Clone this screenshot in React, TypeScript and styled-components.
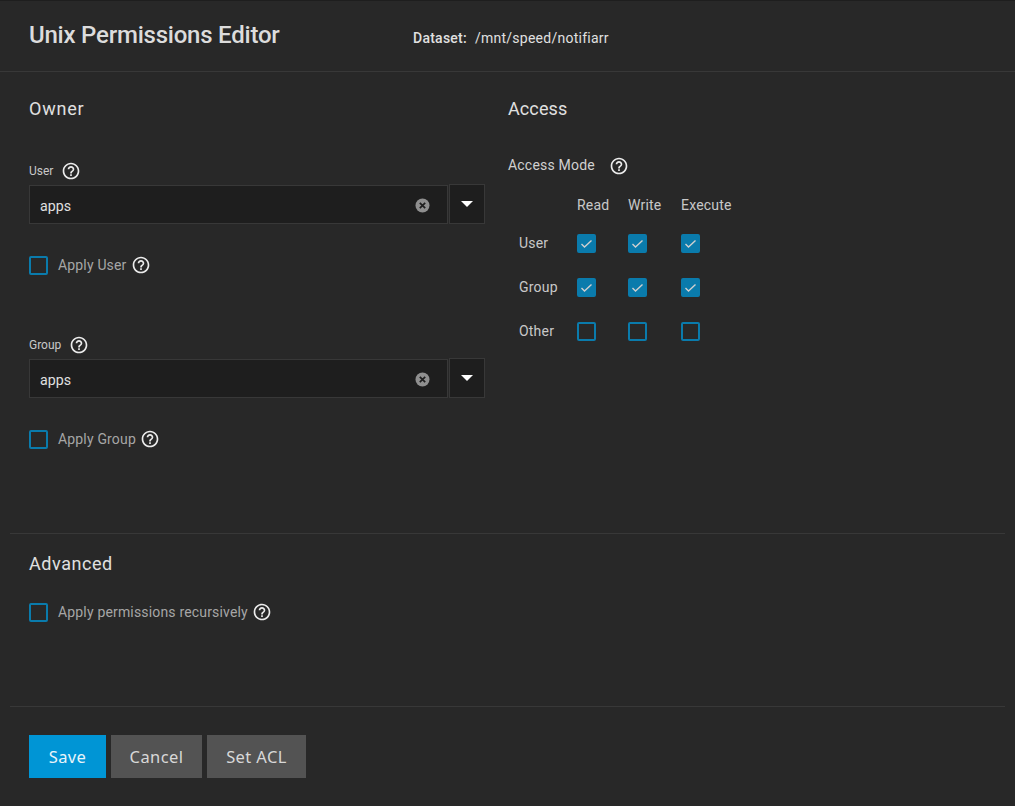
import styled, { createGlobalStyle } from "styled-components";

const GlobalStyle = createGlobalStyle`
  html, body {
    margin: 0;
    padding: 0;
    background: #282828;
  }
  * {
    box-sizing: border-box;
  }
  body {
    font-family: Roboto, "Liberation Sans", sans-serif;
    color: #e0e0e0;
  }
`;

const Page = styled.div`
  width: 1015px;
  height: 806px;
  background: #282828;
  border-top: 1px solid #1e1e1e;
  overflow: hidden;
`;

const Header = styled.header`
  display: flex;
  align-items: center;
  height: 71px;
  padding: 0 0 0 29px;
  border-bottom: 1px solid #383838;
`;

const Title = styled.h1`
  width: 384px;
  margin: 0 0 2px;
  font-size: 24px;
  line-height: 28px;
  font-weight: 500;
  letter-spacing: -0.22px;
  color: #dcdcdc;
`;

const Dataset = styled.div`
  display: flex;
  gap: 8px;
  margin-top: 4px;
  font-size: 14px;
  line-height: 20px;
  letter-spacing: 0.25px;
  color: #e0e0e0;

  & > strong {
    font-weight: 500;
  }
`;

const Columns = styled.div`
  display: grid;
  grid-template-columns: 457px 1fr;
  column-gap: 22px;
  height: 461px;
  padding: 26px 0 0 29px;
`;

const SectionTitle = styled.h2<{ $tracking?: number }>`
  margin: 0;
  font-size: 18px;
  line-height: 22px;
  font-weight: 400;
  letter-spacing: ${({ $tracking }) => $tracking ?? 0.55}px;
  color: #e0e0e0;
`;

const Field = styled.div<{ $top: number }>`
  margin-top: ${({ $top }) => $top}px;
`;

const FieldLabel = styled.label`
  display: flex;
  align-items: center;
  gap: 8px;
  height: 18px;
  font-size: 12px;
  color: #c8c8c8;
`;

const SelectRow = styled.div`
  display: flex;
  align-items: flex-end;
  gap: 1px;
  margin-top: 4px;
`;

const SelectInput = styled.div`
  display: flex;
  align-items: center;
  justify-content: space-between;
  width: 419px;
  height: 39px;
  padding: 2px 17px 0 10px;
  background: #1e1e1e;
  border: 1px solid #383838;
  font-size: 14.2px;
  color: #e0e0e0;
`;

const SelectToggle = styled.button`
  display: flex;
  align-items: center;
  justify-content: center;
  width: 36px;
  height: 40px;
  padding: 0;
  background: #1e1e1e;
  border: 1px solid #383838;
`;

const CheckRow = styled.label<{ $top: number }>`
  display: flex;
  align-items: center;
  margin-top: ${({ $top }) => $top}px;
  height: 19px;
  font-size: 14px;
  letter-spacing: 0.17px;
  color: #a6a6a6;

  & > svg {
    margin-bottom: 2px;
  }
`;

const CheckText = styled.span`
  margin: 0 4px 2px 10px;
`;

const Box = styled.span<{ $checked?: boolean }>`
  display: inline-flex;
  align-items: center;
  justify-content: center;
  flex: none;
  width: 19px;
  height: 19px;
  border: 2px solid #0a7bac;
  border-radius: 2px;
  background: ${({ $checked }) => ($checked ? "#0a7bac" : "transparent")};
`;

const AccessHead = styled.div`
  display: flex;
  align-items: center;
  gap: 14px;
  margin-top: 33px;
  height: 24px;
  font-size: 14px;
  letter-spacing: 0.2px;
  color: #d0d0d0;

  & > svg {
    margin-top: 2px;
  }
`;

const MatrixHeader = styled.div`
  display: grid;
  grid-template-columns: 69px 51px 53px 60px;
  height: 33px;
  margin-top: 7px;
  font-size: 14px;
  letter-spacing: 0.2px;
  color: #c8c8c8;
`;

const ColHead = styled.span`
  line-height: 20px;
  margin-top: 11px;
`;

const Matrix = styled.div`
  display: grid;
  grid-template-columns: 69px 51px 53px 60px;
  grid-auto-rows: 44px;
  margin-top: 4px;
  font-size: 14px;
  letter-spacing: 0.2px;
  color: #c8c8c8;
`;

const MatrixRow = styled.div`
  display: contents;
`;

const RowLabel = styled.span`
  align-self: center;
  padding-left: 11px;
  margin-top: -1px;
`;

const MatrixCell = styled.span`
  display: flex;
  align-items: center;
`;

const Divider = styled.hr`
  margin: 0 10px;
  border: 0;
  border-top: 1px solid #383838;
`;

const Advanced = styled.section`
  height: 172px;
  padding: 19px 0 0 29px;
`;

const Actions = styled.footer`
  display: flex;
  gap: 5px;
  padding: 28px 0 0 29px;
`;

const ActionButton = styled.button<{ $primary?: boolean; $width: number }>`
  width: ${({ $width }) => $width}px;
  height: 43px;
  padding: 0;
  border: 0;
  font-family: "Noto Sans", sans-serif;
  font-size: 16.5px;
  letter-spacing: 0.4px;
  color: ${({ $primary }) => ($primary ? "#e8f4fa" : "#d8d8d8")};
  background: ${({ $primary }) => ($primary ? "#0095d5" : "#535353")};
`;

const HelpIcon = () => (
  <svg width="20" height="20" viewBox="0 0 24 24" fill="none">
    <path
      fill="#ececec"
      d="M11 18h2v-2h-2v2zm1-16C6.48 2 2 6.48 2 12s4.48 10 10 10 10-4.48 10-10S17.52 2 12 2zm0 18c-4.41 0-8-3.59-8-8s3.59-8 8-8 8 3.59 8 8-3.59 8-8 8zm0-14c-2.21 0-4 1.79-4 4h2c0-1.1.9-2 2-2s2 .9 2 2c0 2-3 1.75-3 5h2c0-2.25 3-2.5 3-5 0-2.21-1.79-4-4-4z"
    />
  </svg>
);

const ClearIcon = () => (
  <svg width="15" height="15" viewBox="0 0 15 15">
    <circle cx="7.5" cy="7.5" r="7" fill="#8f8f8f" />
    <path d="M4.8 4.8l5.4 5.4M10.2 4.8l-5.4 5.4" stroke="#1e1e1e" strokeWidth="1.7" />
  </svg>
);

const CaretIcon = () => (
  <svg width="12" height="6" viewBox="0 0 12 6">
    <path d="M0 0h12L6 6z" fill="#ffffff" />
  </svg>
);

const CheckIcon = () => (
  <svg width="13" height="13" viewBox="0 0 13 13" fill="none">
    <path d="M1.5 7l3 3 7-6.5" stroke="#d0d0d0" strokeWidth="1.4" />
  </svg>
);

const modes = [
  { name: "User", on: true },
  { name: "Group", on: true },
  { name: "Other", on: false },
];

const OwnerField = ({ label, top, checkLabel }: { label: string; top: number; checkLabel: string }) => (
  <>
    <Field $top={top}>
      <FieldLabel>
        {label}
        <HelpIcon />
      </FieldLabel>
      <SelectRow>
        <SelectInput>
          apps
          <ClearIcon />
        </SelectInput>
        <SelectToggle>
          <CaretIcon />
        </SelectToggle>
      </SelectRow>
    </Field>
    <CheckRow $top={32}>
      <Box />
      <CheckText>{checkLabel}</CheckText>
      <HelpIcon />
    </CheckRow>
  </>
);

export default function App() {
  return (
    <Page>
      <GlobalStyle />
      <Header>
        <Title>Unix Permissions Editor</Title>
        <Dataset>
          <strong>Dataset:</strong>
          <span>/mnt/speed/notifiarr</span>
        </Dataset>
      </Header>
      <Columns>
        <div>
          <SectionTitle $tracking={0.8}>Owner</SectionTitle>
          <OwnerField label="User" top={42} checkLabel="Apply User" />
          <OwnerField label="Group" top={61} checkLabel="Apply Group" />
        </div>
        <div>
          <SectionTitle $tracking={0.1}>Access</SectionTitle>
          <AccessHead>
            Access Mode
            <HelpIcon />
          </AccessHead>
          <MatrixHeader>
            <span />
            <ColHead>Read</ColHead>
            <ColHead>Write</ColHead>
            <ColHead>Execute</ColHead>
          </MatrixHeader>
          <Matrix>
            {modes.map((mode) => (
              <MatrixRow key={mode.name}>
                <RowLabel>{mode.name}</RowLabel>
                {[0, 1, 2].map((col) => (
                  <MatrixCell key={col}>
                    <Box $checked={mode.on}>{mode.on && <CheckIcon />}</Box>
                  </MatrixCell>
                ))}
              </MatrixRow>
            ))}
          </Matrix>
        </div>
      </Columns>
      <Divider />
      <Advanced>
        <SectionTitle>Advanced</SectionTitle>
        <CheckRow $top={28}>
          <Box />
          <CheckText>Apply permissions recursively</CheckText>
          <HelpIcon />
        </CheckRow>
      </Advanced>
      <Divider />
      <Actions>
        <ActionButton $primary $width={77}>Save</ActionButton>
        <ActionButton $width={91}>Cancel</ActionButton>
        <ActionButton $width={99}>Set ACL</ActionButton>
      </Actions>
    </Page>
  );
}
